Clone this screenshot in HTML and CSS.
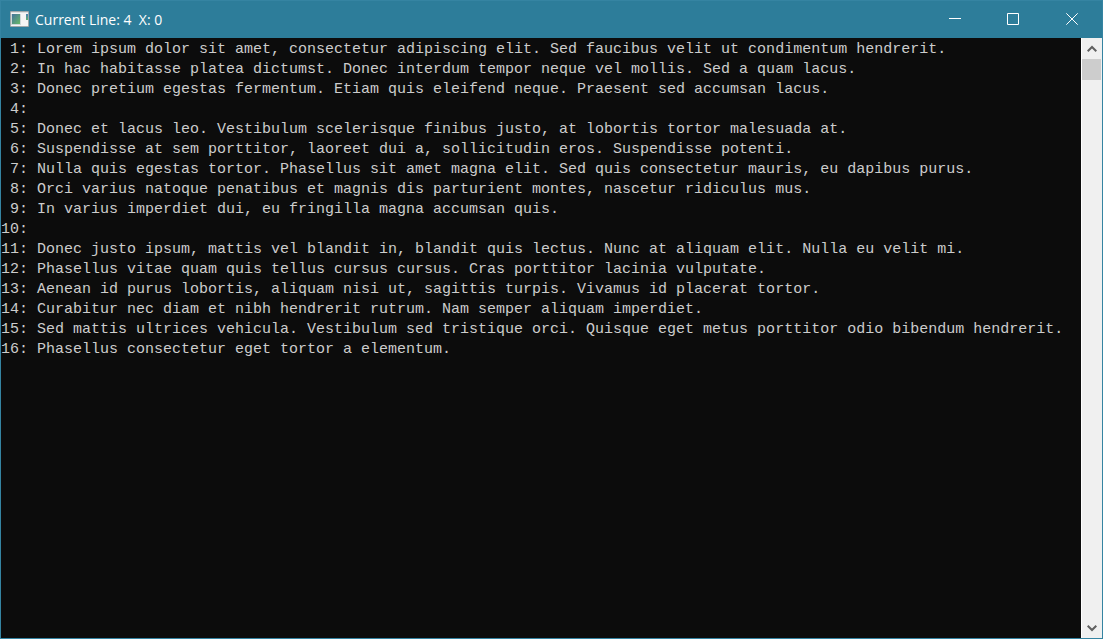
FILE: index.html
```html
<!DOCTYPE html>
<html lang="en">
<head>
<meta charset="utf-8">
<title>Current Line: 4  X: 0</title>
<link rel="stylesheet" href="styles.css">
</head>
<body>
<div class="window">
  <header class="titlebar">
    <svg class="app-icon" viewBox="0 0 19 16" aria-hidden="true">
      <defs>
        <linearGradient id="screen" x1="0" y1="0" x2="1" y2="1">
          <stop offset="0" stop-color="#44749c"/>
          <stop offset="1" stop-color="#68b868"/>
        </linearGradient>
        <linearGradient id="edge" x1="0" y1="0" x2="0" y2="1">
          <stop offset="0" stop-color="#4a7fb0"/>
          <stop offset="1" stop-color="#62b070"/>
        </linearGradient>
      </defs>
      <rect width="19" height="16" rx="1" fill="#a0a8aa"/>
      <rect x="1" y="1" width="17" height="14" fill="#f5f5f5"/>
      <rect x="1" y="1" width="17" height="1" fill="#dcdfdf"/>
      <rect x="1" y="3" width="10" height="11" fill="#cfd8d8"/>
      <rect x="2" y="3" width="8" height="10" fill="url(#screen)"/>
      <rect x="16" y="3" width="2" height="6" fill="url(#edge)"/>
    </svg>
    <h1 class="title">Current Line: 4&nbsp; X: 0</h1>
    <div class="controls">
      <button class="control" type="button" aria-label="Minimize">
        <svg class="glyph" viewBox="0 0 12 12" aria-hidden="true"><path d="M0 5.5H12"/></svg>
      </button>
      <button class="control" type="button" aria-label="Maximize">
        <svg class="glyph" viewBox="0 0 12 12" aria-hidden="true"><path d="M.5 .5H11.5V11.5H.5Z"/></svg>
      </button>
      <button class="control" type="button" aria-label="Close">
        <svg class="glyph" viewBox="0 0 12 12" aria-hidden="true"><path d="M.3 .3L11.7 11.7M11.7 .3L.3 11.7"/></svg>
      </button>
    </div>
  </header>
  <main class="console">
    <div class="buffer">
      <div class="line"> 1: Lorem ipsum dolor sit amet, consectetur adipiscing elit. Sed faucibus velit ut condimentum hendrerit.</div>
      <div class="line"> 2: In hac habitasse platea dictumst. Donec interdum tempor neque vel mollis. Sed a quam lacus.</div>
      <div class="line"> 3: Donec pretium egestas fermentum. Etiam quis eleifend neque. Praesent sed accumsan lacus.</div>
      <div class="line"> 4:</div>
      <div class="line"> 5: Donec et lacus leo. Vestibulum scelerisque finibus justo, at lobortis tortor malesuada at.</div>
      <div class="line"> 6: Suspendisse at sem porttitor, laoreet dui a, sollicitudin eros. Suspendisse potenti.</div>
      <div class="line"> 7: Nulla quis egestas tortor. Phasellus sit amet magna elit. Sed quis consectetur mauris, eu dapibus purus.</div>
      <div class="line"> 8: Orci varius natoque penatibus et magnis dis parturient montes, nascetur ridiculus mus.</div>
      <div class="line"> 9: In varius imperdiet dui, eu fringilla magna accumsan quis.</div>
      <div class="line">10:</div>
      <div class="line">11: Donec justo ipsum, mattis vel blandit in, blandit quis lectus. Nunc at aliquam elit. Nulla eu velit mi.</div>
      <div class="line">12: Phasellus vitae quam quis tellus cursus cursus. Cras porttitor lacinia vulputate.</div>
      <div class="line">13: Aenean id purus lobortis, aliquam nisi ut, sagittis turpis. Vivamus id placerat tortor.</div>
      <div class="line">14: Curabitur nec diam et nibh hendrerit rutrum. Nam semper aliquam imperdiet.</div>
      <div class="line">15: Sed mattis ultrices vehicula. Vestibulum sed tristique orci. Quisque eget metus porttitor odio bibendum hendrerit.</div>
      <div class="line">16: Phasellus consectetur eget tortor a elementum.</div>
    </div>
    <div class="scrollbar">
      <button class="scroll-button" type="button" aria-label="Scroll up">
        <svg class="chevron" viewBox="0 0 10 8" aria-hidden="true"><path d="M.7 6.3L5 2L9.3 6.3"/></svg>
      </button>
      <div class="track"><div class="thumb"></div></div>
      <button class="scroll-button" type="button" aria-label="Scroll down">
        <svg class="chevron" viewBox="0 0 10 8" aria-hidden="true"><path d="M.7 1.7L5 6L9.3 1.7"/></svg>
      </button>
    </div>
  </main>
</div>
</body>
</html>
```

FILE: styles.css
```css
* {
  box-sizing: border-box;
}

body {
  margin: 0;
}

.window {
  display: flex;
  flex-direction: column;
  height: 100vh;
  border: 1px solid #3584a2;
  background: #0c0c0c;
}

.titlebar {
  display: flex;
  align-items: center;
  flex: none;
  height: 37px;
  padding: 0 0 1px 9px;
  background: #2d7d9a;
  color: #fff;
}

.app-icon {
  width: 19px;
  height: 16px;
}

.title {
  flex: 1;
  margin: 0;
  padding: 2px 0 0 6px;
  font: 400 14px/20px "Open Sans", "Noto Sans", sans-serif;
  white-space: nowrap;
}

.controls {
  display: flex;
  align-self: stretch;
}

.control {
  display: flex;
  align-items: center;
  justify-content: center;
  width: 58px;
  padding: 0;
  border: 0;
  background: none;
}

.control:last-child {
  width: 60px;
}

.glyph {
  width: 12px;
  height: 12px;
  fill: none;
  stroke: #fff;
}

.console {
  display: flex;
  flex: 1;
  min-height: 0;
}

.buffer {
  flex: 1;
  min-width: 0;
  padding-top: 2px;
  overflow: hidden;
  color: #ccc;
  font: 15px/20px "Liberation Mono", monospace;
}

.line {
  height: 20px;
  white-space: pre;
}

.scrollbar {
  display: flex;
  flex-direction: column;
  flex: none;
  width: 21px;
  border-left: 1px solid #fff;
  background: #f0f0f0;
}

.scroll-button {
  display: flex;
  align-items: center;
  justify-content: center;
  height: 21px;
  padding: 0;
  border: 0;
  background: none;
}

.chevron {
  width: 10px;
  height: 8px;
  fill: none;
  stroke: #606060;
  stroke-width: 2;
}

.track {
  flex: 1;
  padding-right: 1px;
}

.thumb {
  height: 21px;
  background: #cdcdcd;
}
```
